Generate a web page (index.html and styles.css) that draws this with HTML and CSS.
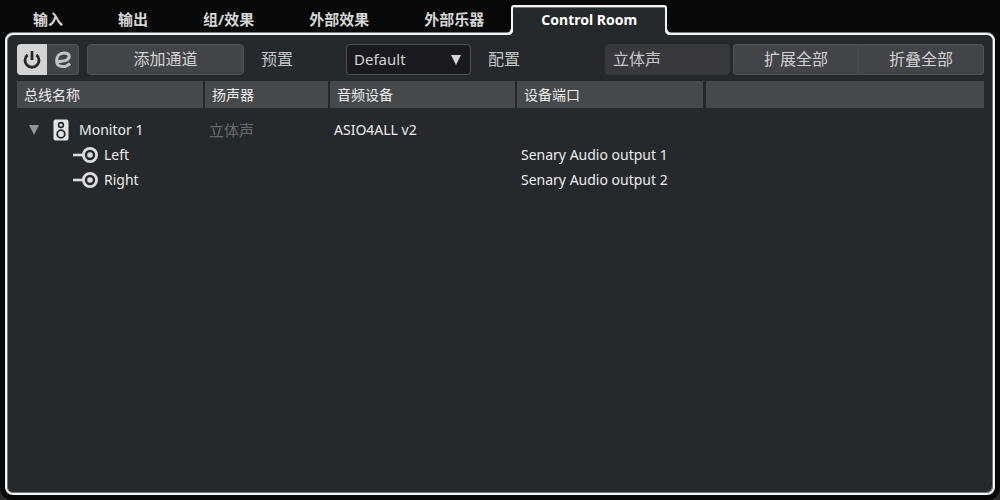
FILE: index.html
```html
<!DOCTYPE html>
<html lang="zh-CN">
<head>
  <meta charset="utf-8">
  <title>Control Room</title>
  <meta name="viewport" content="width=device-width, initial-scale=1">
  <link rel="stylesheet" href="styles.css">
</head>

<body>
<div class="window">
  <nav class="tabs">
    <a class="tab" href="#">输入</a>
    <a class="tab" href="#">输出</a>
    <a class="tab" href="#">组/效果</a>
    <a class="tab" href="#">外部效果</a>
    <a class="tab" href="#">外部乐器</a>
    <a class="tab active" href="#">Control Room</a>
  </nav>

  <main class="panel">
    <div class="toolbar">
      <div class="group">
        <button class="btn power" aria-label="Power">
          <svg width="18" height="18" viewBox="0 0 18 18" fill="none" stroke="#29292b" stroke-width="2.8">
            <path d="M4.6 3.8A7 7 0 1 0 13.4 3.8"/>
            <path d="M9 0v9"/>
          </svg>
        </button>
        <button class="btn edit" aria-label="Edit">
          <svg width="18" height="18" viewBox="0 0 18 18" fill="none" stroke="#c4c4c4" stroke-width="3">
            <path d="M2.6 10.6C8 10.6 15.2 9.6 15.2 5.6C15.2 3 12.8 2 10 2C5.4 2 2.6 5.4 2.6 9.6C2.6 13.6 5 15.6 8.6 15.6C11.6 15.6 14 14.6 16 12.4"/>
          </svg>
        </button>
      </div>
      <button class="btn add">添加通道</button>
      <label class="label" for="preset">预置</label>
      <div class="select">
        <select id="preset">
          <option>Default</option>
        </select>
        <svg class="arrow" width="10" height="10" viewBox="0 0 10 10"><path d="M0 0h10L5 10z" fill="#d4d4d4"/></svg>
      </div>
      <label class="label" for="config">配置</label>
      <input class="field" id="config" type="text" value="立体声" readonly>
      <div class="group right">
        <button class="btn">扩展全部</button>
        <button class="btn">折叠全部</button>
      </div>
    </div>

    <table class="buses">
      <colgroup>
        <col class="col-name">
        <col class="col-speaker">
        <col class="col-device">
        <col class="col-port">
        <col>
      </colgroup>
      <thead>
        <tr>
          <th>总线名称</th>
          <th>扬声器</th>
          <th>音频设备</th>
          <th class="wide">设备端口</th>
          <th class="last"></th>
        </tr>
      </thead>
      <tbody>
        <tr class="bus">
          <td>
            <div class="name">
              <button class="toggle" aria-label="Monitor 1">
                <svg width="10" height="10" viewBox="0 0 10 10"><path d="M0 0h10L5 10z" fill="#929394"/></svg>
              </button>
              <svg width="16" height="22" viewBox="0 0 16 22">
                <rect x="0.5" y="0.5" width="15" height="21" rx="2" fill="#e4e4e4"/>
                <g fill="none" stroke="#25292b">
                  <circle cx="8" cy="6" r="2.4" stroke-width="1.6"/>
                  <circle cx="8" cy="15" r="3.8" stroke-width="1.8"/>
                </g>
              </svg>
              <span>Monitor 1</span>
            </div>
          </td>
          <td class="dim">立体声</td>
          <td>ASIO4ALL v2</td>
          <td></td>
          <td></td>
        </tr>
        <tr>
          <td>
            <div class="name channel">
              <svg width="25" height="16" viewBox="0 0 25 16">
                <path d="M0 8h10" stroke="#dcdcdc" stroke-width="2.6"/>
                <circle cx="17" cy="8" r="6.6" fill="none" stroke="#dcdcdc" stroke-width="2.8"/>
                <circle cx="17" cy="8" r="2.8" fill="#dcdcdc"/>
              </svg>
              <span>Left</span>
            </div>
          </td>
          <td></td>
          <td></td>
          <td>Senary Audio output 1</td>
          <td></td>
        </tr>
        <tr>
          <td>
            <div class="name channel">
              <svg width="25" height="16" viewBox="0 0 25 16">
                <path d="M0 8h10" stroke="#dcdcdc" stroke-width="2.6"/>
                <circle cx="17" cy="8" r="6.6" fill="none" stroke="#dcdcdc" stroke-width="2.8"/>
                <circle cx="17" cy="8" r="2.8" fill="#dcdcdc"/>
              </svg>
              <span>Right</span>
            </div>
          </td>
          <td></td>
          <td></td>
          <td>Senary Audio output 2</td>
          <td></td>
        </tr>
      </tbody>
    </table>
  </main>
</div>
</body>
</html>
```

FILE: styles.css
```css
* {
  box-sizing: border-box;
}

html {
  background-color: #2c2c2c;
}

body {
  margin: 0;
  color: #ececec;
  font-family: "Noto Sans", "Noto Sans CJK SC", sans-serif;
  font-size: 14px;
}

button, select, input {
  font-family: inherit;
  margin: 0;
}

svg {
  display: block;
  flex: none;
}

.window {
  display: flex;
  flex-direction: column;
  min-height: 100vh;
  padding: 5px;
  background-color: #080808;
  border-radius: 0 0 12px 12px;
}

/* tabs */

.tabs {
  display: flex;
  padding-left: 1px;
}

.tab {
  height: 28px;
  padding: 0 27px;
  margin-right: 1px;
  color: #d6d6d6;
  font-size: 15px;
  font-weight: bold;
  line-height: 28px;
  text-decoration: none;
  white-space: nowrap;
}

.tab.active {
  position: relative;
  height: 30px;
  margin: 0 0 -2px -1px;
  padding: 0 28px;
  border: 2px solid #f4f4f4;
  border-bottom: none;
  border-radius: 3px 3px 0 0;
  background-color: #25292c;
  box-shadow: inset 0 1px #77797b;
  color: #fff;
  font-size: 14px;
  line-height: 26px;
}

/* rounded feet that join the tab to the panel border */
.tab.active::before,
.tab.active::after {
  content: "";
  position: absolute;
  bottom: 0;
  width: 6px;
  height: 6px;
}

.tab.active::before {
  left: -6px;
  background: radial-gradient(circle at 0 0, #080808 3px, #f4f4f4 4px, #f4f4f4 6px, #25292c 7px);
}

.tab.active::after {
  right: -6px;
  background: radial-gradient(circle at 100% 0, #080808 3px, #f4f4f4 4px, #f4f4f4 6px, #25292c 7px);
}

/* panel */

.panel {
  flex: 1;
  padding: 9px 9px 9px 10px;
  border: 2px solid #f4f4f4;
  border-radius: 8px;
  background-color: #25292c;
  box-shadow: inset 1px 0 #77797b, inset -1px -1px #77797b, 0 -1px #77797b;
}

.toolbar {
  display: grid;
  grid-template-columns: 62px 165fr 102fr 125fr 134fr 125fr 254fr;
  align-items: center;
  height: 31px;
  margin-bottom: 6px;
  font-size: 16px;
}

.group {
  display: flex;
  height: 31px;
}

.group.right {
  margin-left: 3px;
}

.btn {
  flex: 1;
  height: 31px;
  padding: 0 0 3px;
  border: 1px solid #515255;
  border-radius: 4px;
  background-color: #434448;
  color: #d2d2d2;
  font-size: 16px;
}

.group .btn:first-child {
  border-right-color: #4a4b4e;
  border-radius: 4px 0 0 4px;
}

.group .btn:last-child {
  border-left: none;
  border-radius: 0 4px 4px 0;
}

.group .power,
.group .edit {
  display: flex;
  align-items: center;
  justify-content: center;
  padding: 0;
}

.group .power {
  flex: 0 0 30px;
  border: none;
  border-radius: 2px 0 0 2px;
  background-color: #d4d4d4;
}

.add {
  margin-left: 8px;
}

.label {
  padding: 0 0 3px 17px;
  color: #c4c6c8;
}

.select {
  position: relative;
}

.select select {
  display: block;
  width: 100%;
  height: 31px;
  padding: 0 7px 2px;
  appearance: none;
  border: 1px solid #505155;
  border-radius: 4px;
  background-color: #1a1a1e;
  color: #d2d2d2;
  font-size: 15px;
}

.arrow {
  position: absolute;
  top: 11px;
  right: 10px;
  pointer-events: none;
}

.field {
  width: 100%;
  height: 31px;
  padding: 0 8px 3px;
  border: none;
  border-radius: 4px;
  background-color: #39393d;
  color: #c8c8c8;
  font-size: 16px;
}

/* bus list */

.buses {
  width: 100%;
  table-layout: fixed;
  border-collapse: separate;
  border-spacing: 0;
}

.col-name {
  width: 188px;
}

.col-speaker {
  width: 125px;
}

.col-device {
  width: 187px;
}

.col-port {
  width: 189px;
}

.buses th {
  height: 27px;
  padding: 0 7px;
  border-right: 2px solid #25292c;
  background-color: #45494b;
  font-weight: normal;
  line-height: 20px;
  text-align: left;
}

.buses th.wide {
  border-right-width: 3px;
}

.buses th.last {
  border-right: none;
}

.buses td {
  height: 25px;
  padding: 0 4px;
  line-height: 24px;
  white-space: nowrap;
}

.buses .bus td {
  height: 34px;
  padding-top: 9px;
}

.buses .dim {
  color: #66696b;
  font-size: 15px;
}

.name {
  display: flex;
  align-items: center;
  gap: 10px;
  height: 24px;
  padding-left: 4px;
}

.name.channel {
  gap: 6px;
  padding-left: 52px;
}

.toggle {
  width: 18px;
  padding: 0 4px;
  border: none;
  background: none;
}
```
